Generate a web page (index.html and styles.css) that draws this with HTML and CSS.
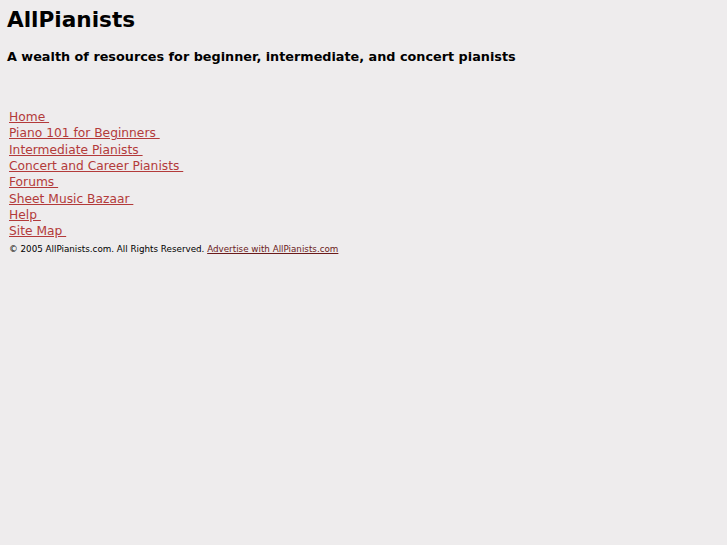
FILE: index.html
```html
<!DOCTYPE html>
<html>
<head>
<meta charset="utf-8">
<title>AllPianists</title>
<link rel="stylesheet" href="styles.css">
</head>
<body>
<div class="page">
  <h1 class="title">AllPianists</h1>
  <p class="tagline">A wealth of resources for beginner, intermediate, and concert pianists</p>
  <div class="nav">
    <a href="#">Home&nbsp;</a><br>
    <a href="#">Piano 101 for Beginners&nbsp;</a><br>
    <a href="#">Intermediate Pianists&nbsp;</a><br>
    <a href="#">Concert and Career Pianists&nbsp;</a><br>
    <a href="#">Forums&nbsp;</a><br>
    <a href="#">Sheet Music Bazaar&nbsp;</a><br>
    <a href="#">Help&nbsp;</a><br>
    <a href="#">Site Map&nbsp;</a>
  </div>
  <p class="footer">© 2005 AllPianists.com. All Rights Reserved. <a href="#">Advertise with AllPianists.com</a></p>
</div>
</body>
</html>
```
FILE: styles.css
```css
html, body {
  margin: 0;
  padding: 0;
  background: #eeeced;
}
body {
  font-family: "DejaVu Sans", Verdana, sans-serif;
  color: #000;
}
.page {
  padding: 6px 7px;
}
.title {
  font-size: 21.6px;
  font-weight: bold;
  margin: 0 0 15px 0;
  line-height: 28px;
}
.tagline {
  font-size: 12.8px;
  font-weight: bold;
  margin: 0 0 45px 0;
}
.nav {
  padding-left: 2px;
  font-size: 12.25px;
  line-height: 16.35px;
}
.nav a {
  color: #b33a3a;
}
.footer {
  margin: 4px 0 0 2px;
  font-size: 8.75px;
}
.footer a {
  color: #6b1a1a;
}
```
